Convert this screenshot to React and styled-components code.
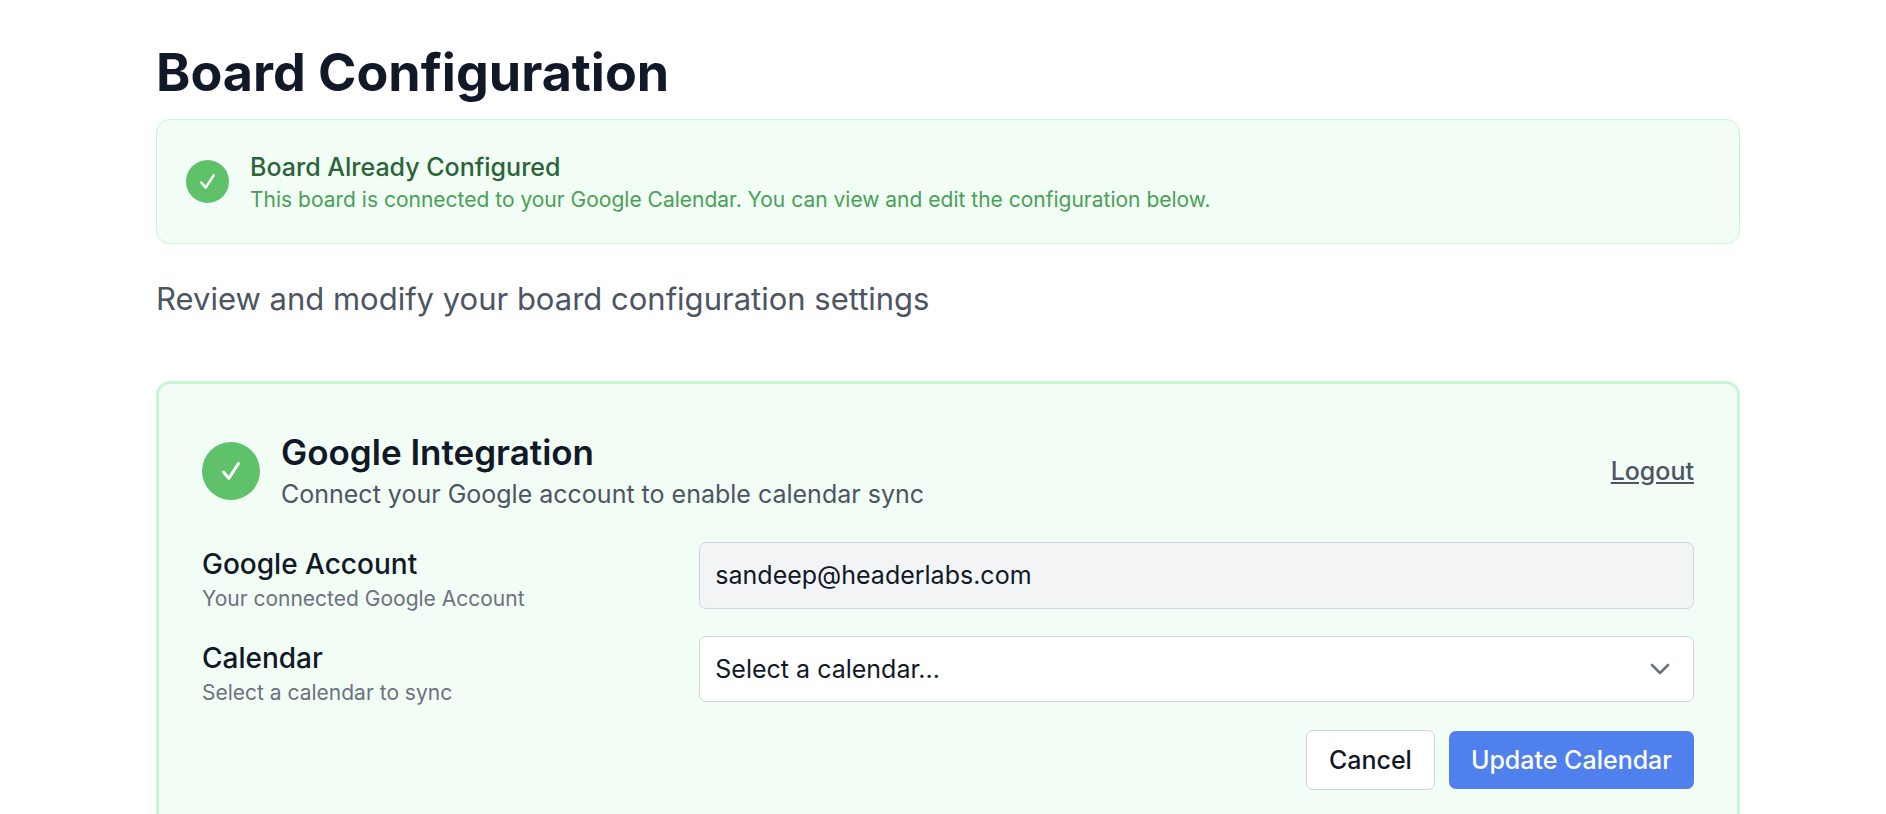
import React from "react";
import styled, { createGlobalStyle } from "styled-components";

const GlobalStyle = createGlobalStyle`
  *, *::before, *::after { box-sizing: border-box; }
  body {
    margin: 0;
    background: #fff;
    color: #111827;
    font-family: Inter, "Liberation Sans", sans-serif;
    -webkit-font-smoothing: antialiased;
  }
  h1, h2, p { margin: 0; }
  button, input, select { font-family: inherit; }
`;

const Page = styled.main`
  padding: 40px 146px 48px 156px;
`;

const Title = styled.h1`
  font-size: 52px;
  line-height: 66px;
  font-weight: 700;
`;

const Banner = styled.section`
  display: flex;
  align-items: center;
  gap: 21px;
  margin-top: 13px;
  padding: 29px;
  border: 1px solid #c6f6d5;
  border-radius: 14px;
  background: #f2fdf5;
`;

const BannerTitle = styled.p`
  font-size: 25px;
  line-height: 36px;
  font-weight: 500;
  color: #2a6437;
`;

const BannerText = styled.p`
  font-size: 21px;
  line-height: 29px;
  color: #48a156;
`;

const StatusDot = styled.span`
  flex: none;
  display: grid;
  place-items: center;
  width: ${(p) => p.$size}px;
  height: ${(p) => p.$size}px;
  border-radius: 50%;
  background: #5fc26b;
  color: #fff;
`;

const Intro = styled.p`
  margin-top: 32px;
  font-size: 31px;
  line-height: 46px;
  color: #4b5563;
`;

const Card = styled.section`
  margin-top: 59px;
  padding: 44px 43px;
  border: 3px solid #c6f6d5;
  border-radius: 14px;
  background: #f2fdf5;
`;

const CardHeader = styled.header`
  display: flex;
  align-items: center;
  gap: 21px;
  margin-bottom: 29px;
`;

const HeaderText = styled.div`
  flex: 1;
`;

const CardTitle = styled.h2`
  font-size: 35px;
  line-height: 48px;
  font-weight: 600;
`;

const CardSubtitle = styled.p`
  font-size: 25px;
  line-height: 37px;
  color: #4b5563;
`;

const LogoutButton = styled.button`
  padding: 0;
  border: 0;
  background: none;
  font-size: 25px;
  line-height: 36px;
  font-weight: 500;
  color: #4b5563;
  text-decoration: underline;
  cursor: pointer;
`;

const Form = styled.form`
  display: flex;
  flex-direction: column;
  gap: 21px;
`;

const FieldRow = styled.div`
  display: grid;
  grid-template-columns: 1fr 2fr;
  align-items: start;
`;

const FieldInfo = styled.div`
  padding-top: 4px;
`;

const FieldLabel = styled.label`
  display: block;
  font-size: 28px;
  line-height: 36px;
  font-weight: 500;
`;

const FieldHint = styled.p`
  font-size: 21px;
  line-height: 33px;
  color: #6b7280;
`;

const TextInput = styled.input`
  width: 100%;
  height: 67px;
  padding: 0 15px 1px;
  border: 1px solid #d1d5db;
  border-radius: 7px;
  background: #f3f4f6;
  color: #111827;
  font-size: 25px;
`;

const SelectWrap = styled.div`
  position: relative;
`;

const Select = styled.select`
  display: block;
  appearance: none;
  width: 100%;
  height: 66px;
  padding: 0 60px 0 15px;
  border: 1px solid #d1d5db;
  border-radius: 7px;
  background: #fff;
  color: #111827;
  font-size: 25px;
`;

const Chevron = styled.svg`
  position: absolute;
  top: 0;
  bottom: 0;
  right: 20px;
  margin: auto 0;
  color: #6b7280;
  pointer-events: none;
`;

const Actions = styled.div`
  display: flex;
  justify-content: flex-end;
  align-items: center;
  gap: 14px;
`;

const Button = styled.button`
  padding: 11px 22px;
  border: ${(p) => (p.$primary ? "0" : "1px solid #d1d5db")};
  border-radius: 7px;
  background: ${(p) => (p.$primary ? "#4f80ee" : "#fff")};
  color: ${(p) => (p.$primary ? "#fff" : "#111827")};
  font-size: 25px;
  line-height: 36px;
  font-weight: 500;
  cursor: pointer;
`;

function Check({ width, height }) {
  return (
    <svg width={width} height={height} viewBox="0 0 18 18" fill="none" aria-hidden="true">
      <path
        d="M1.6 10.2 6.8 16.4 16.4 1.6"
        stroke="currentColor"
        strokeWidth="3"
        strokeLinecap="round"
        strokeLinejoin="round"
      />
    </svg>
  );
}

export default function App() {
  return (
    <>
      <GlobalStyle />
      <Page>
        <Title>Board Configuration</Title>
        <Banner>
          <StatusDot $size={43}>
            <Check width={15} height={15} />
          </StatusDot>
          <div>
            <BannerTitle>Board Already Configured</BannerTitle>
            <BannerText>
              This board is connected to your Google Calendar. You can view and edit the
              configuration below.
            </BannerText>
          </div>
        </Banner>
        <Intro>Review and modify your board configuration settings</Intro>

        <Card>
          <CardHeader>
            <StatusDot $size={58}>
              <Check width={18} height={18} />
            </StatusDot>
            <HeaderText>
              <CardTitle>Google Integration</CardTitle>
              <CardSubtitle>Connect your Google account to enable calendar sync</CardSubtitle>
            </HeaderText>
            <LogoutButton type="button">Logout</LogoutButton>
          </CardHeader>

          <Form onSubmit={(e) => e.preventDefault()}>
            <FieldRow>
              <FieldInfo>
                <FieldLabel htmlFor="account">Google Account</FieldLabel>
                <FieldHint id="account-hint">Your connected Google Account</FieldHint>
              </FieldInfo>
              <TextInput
                id="account"
                type="email"
                value="sandeep@headerlabs.com"
                readOnly
                aria-describedby="account-hint"
              />
            </FieldRow>
            <FieldRow>
              <FieldInfo>
                <FieldLabel htmlFor="calendar">Calendar</FieldLabel>
                <FieldHint id="calendar-hint">Select a calendar to sync</FieldHint>
              </FieldInfo>
              <SelectWrap>
                <Select id="calendar" defaultValue="" aria-describedby="calendar-hint">
                  <option value="">Select a calendar...</option>
                </Select>
                <Chevron width="28" height="28" viewBox="0 0 28 28" fill="none" aria-hidden="true">
                  <path
                    d="M6 10 14 18 22 10"
                    stroke="currentColor"
                    strokeWidth="2.6"
                    strokeLinecap="round"
                    strokeLinejoin="round"
                  />
                </Chevron>
              </SelectWrap>
            </FieldRow>
            <Actions>
              <Button type="button">Cancel</Button>
              <Button type="submit" $primary>
                Update Calendar
              </Button>
            </Actions>
          </Form>
        </Card>
      </Page>
    </>
  );
}
